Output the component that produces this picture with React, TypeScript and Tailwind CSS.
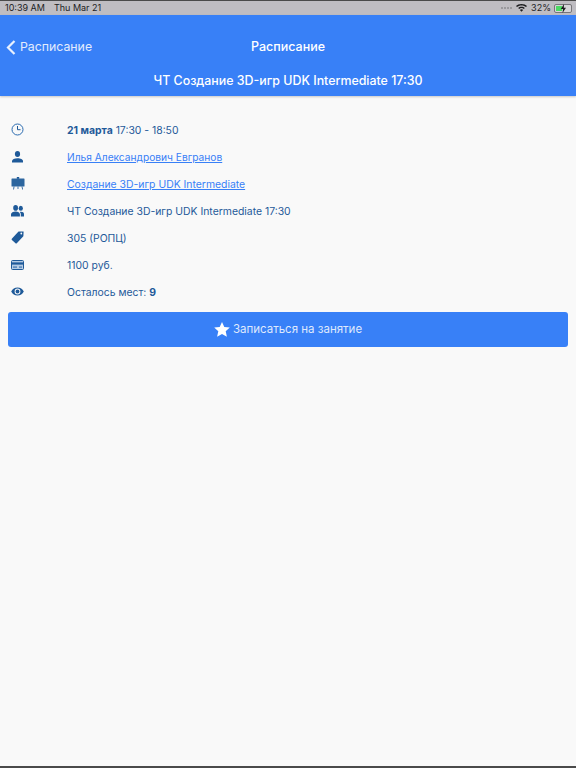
import { ReactNode } from "react";

const font = { fontFamily: "Inter, Roboto, sans-serif" };

function Row({ icon, children }: { icon: ReactNode; children: ReactNode }) {
  return (
    <div className="flex h-[27px] items-center">
      <div className="flex w-[67px] shrink-0 pb-[2px] pl-[11px]">{icon}</div>
      <div className="text-[10.4px] text-[#1f5a99]">{children}</div>
    </div>
  );
}

const ClockIcon = (
  <svg width="13" height="13" viewBox="0 0 13 13" fill="none" stroke="#2a6bb0" strokeWidth="1">
    <circle cx="6.5" cy="6.500" r="5.500" />
    <path d="M6.500 3v3.700h3" stroke="#1f5a99" />
  </svg>
);
const PersonIcon = (
  <svg width="13" height="12" viewBox="0 0 13 12" fill="#1f5a99">
    <ellipse cx="6.500" cy="3" rx="2.600" ry="2.900" />
    <path d="M1 11.500v-1.400C1 8.300 3.500 7.200 6.500 7.200s5.500 1.100 5.500 2.900v1.400z" />
  </svg>
);
const EaselIcon = (
  <svg width="14" height="13" viewBox="0 0 14 13" fill="#1f5a99">
    <rect x="0.500" y="1.500" width="13" height="8" rx="0.500" fill="#2d669f" />
    <rect x="5.800" y="0" width="2.400" height="1.800" />
    <path d="M2.600 9.500h.9L3 12.600h-.8zM10.500 9.500h.9l.6 3.100h-.8zM6.600 9.500h.8v2.600h-.8z" />
  </svg>
);
const GroupIcon = (
  <svg width="13" height="12" viewBox="0 0 13 12" fill="#1f5a99">
    <ellipse cx="4.600" cy="2.900" rx="2.400" ry="2.800" />
    <ellipse cx="9.800" cy="3.200" rx="2.100" ry="2.500" />
    <path d="M0 11.500V9.300C0 7.600 2.200 6.400 4.600 6.400s4.300 1.200 4.300 2.900v2.200z" />
    <path d="M9.800 11.500V9.100c0-1-.4-1.700-1-2.200.4-.1.800-.2 1.200-.2 1.700 0 3 .9 3 2.300v2.500z" />
  </svg>
);
const TagIcon = (
  <svg width="13" height="13" viewBox="0 0 13 13" fill="#1f5a99">
    <path fillRule="evenodd" d="M8 .5 12.200.4c.3 0 .4.200.4.400l-.2 4c0 .3-.1.500-.3.700l-6.300 6.700c-.4.400-.9.400-1.300.1L.9 9.100c-.4-.4-.4-.9-.1-1.300L7.300.8C7.500.6 7.700.5 8 .5zM10.300 1.600a.9.9 0 1 0 0 1.800.9.9 0 0 0 0-1.800z" />
  </svg>
);
const CardIcon = (
  <svg width="13" height="10" viewBox="0 0 13 10" fill="none">
    <rect x="0.500" y="0.500" width="12" height="9" rx="1" fill="#b5cbe3" stroke="#1f5a99" />
    <rect x="0.500" y="2.400" width="12" height="2.200" fill="#1f5a99" />
    <rect x="2" y="6.400" width="4" height="1.400" fill="#4f82b8" />
    <rect x="8" y="6.400" width="3" height="1.400" fill="#4f82b8" />
  </svg>
);
const EyeIcon = (
  <svg width="13" height="9" viewBox="0 0 13 9" fill="#1f5a99">
    <path fillRule="evenodd" d="M6.500.5C9.300.5 11.500 2.100 12.800 4.500 11.500 6.900 9.300 8.500 6.500 8.500S1.500 6.900.2 4.500C1.500 2.100 3.700.5 6.500.5zm0 1.100a2.900 2.900 0 1 0 0 5.800 2.900 2.900 0 0 0 0-5.800z" />
    <circle cx="6.500" cy="4.500" r="1.900" />
  </svg>
);

export default function App() {
  return (
    <div className="flex h-[768px] w-[576px] flex-col overflow-hidden border-b-2 border-[#4a4a4a] bg-[#f9f9f9]" style={font}>
      {/* status bar */}
      <div className="flex h-[15px] shrink-0 items-center justify-between border-t border-[#4a4a4a] bg-[#bfbdc2] pl-[5px] pr-[4px] text-[9px] text-[#1d1d1f]">
        <div className="flex gap-[9px]">
          <span>10:39 AM</span>
          <span>Thu Mar 21</span>
        </div>
        <div className="flex items-center gap-[3px]">
          <div className="mr-[1px] flex gap-[1px]">
            <span className="h-[2px] w-[2px] bg-[#9a999d]" />
            <span className="h-[2px] w-[2px] bg-[#9a999d]" />
            <span className="h-[2px] w-[2px] bg-[#9a999d]" />
            <span className="h-[2px] w-[2px] bg-[#9a999d]" />
          </div>
          <svg width="11" height="8" viewBox="0 0 11 8" fill="#1d1d1f">
            <path d="M5.500 0C8 0 9.800.9 11 2.100L10 3.100C8.900 2.100 7.400 1.400 5.500 1.400S2.100 2.100 1 3.100L0 2.100C1.200.9 3 0 5.500 0z" />
            <path d="M5.500 2.700c1.400 0 2.500.5 3.300 1.300l-1 1c-.6-.5-1.300-.9-2.300-.9s-1.700.4-2.300.9l-1-1c.8-.8 1.900-1.300 3.300-1.300z" />
            <path d="M5.500 5.300c.7 0 1.200.2 1.600.6L5.500 7.700 3.900 5.900c.4-.4.900-.6 1.600-.6z" />
          </svg>
          <span className="ml-[1px]">32%</span>
          <div className="relative flex h-[9px] w-[18px] items-center rounded-[2px] border border-[#77767a] bg-[#d6d5d8] p-[1px]">
            <div className="h-full w-[6px] bg-[#4cd964]" />
            <svg className="absolute left-[5px] top-[-1px]" width="7" height="9" viewBox="0 0 7 9" fill="#1d1d1f">
              <path d="M4 0 .8 5H3L2.500 9 6 3.800H3.800z" />
            </svg>
          </div>
        </div>
      </div>

      {/* nav */}
      <div className="relative z-10 shrink-0 bg-[#3880f7] text-white shadow-[0_1px_2px_rgba(0,0,0,0.2)]">
        <div className="relative flex h-[48px] items-center justify-center pt-[16px]">
          <div className="absolute left-[6px] top-[23px] flex items-center gap-[4px] text-[12.3px] text-[#e3ecfd]">
            <svg width="10" height="15" viewBox="0 0 10 15" fill="none" stroke="#e8f0fe" strokeWidth="2.200">
              <path d="M8.500 1 2 7.500 8.500 14" />
            </svg>
            <span>Расписание</span>
          </div>
          <span className="text-[12.5px] font-medium">Расписание</span>
        </div>
        <div className="flex h-[33px] items-center justify-center pt-[3px] text-[12.4px] font-medium">
          ЧТ Создание 3D-игр UDK Intermediate 17:30
        </div>
      </div>

      {/* details */}
      <div className="flex flex-col px-0 pt-[21px]">
        <Row icon={ClockIcon}>
          <b className="font-bold">21 марта</b> 17:30 - 18:50
        </Row>
        <Row icon={PersonIcon}>
          <span className="text-[10.2px] text-[#3880f7] underline">Илья Александрович Евгранов</span>
        </Row>
        <Row icon={EaselIcon}>
          <span className="text-[#3880f7] underline">Создание 3D-игр UDK Intermediate</span>
        </Row>
        <Row icon={GroupIcon}>ЧТ Создание 3D-игр UDK Intermediate 17:30</Row>
        <Row icon={TagIcon}>305 (РОПЦ)</Row>
        <Row icon={CardIcon}>1100 руб.</Row>
        <Row icon={EyeIcon}>
          Осталось мест: <b className="font-bold">9</b>
        </Row>
        <button className="mx-[8px] mt-[6px] flex h-[35px] items-center justify-center gap-[3px] rounded-[3px] bg-[#3880f7] text-[11.5px] text-[#dfe9fd]">
          <svg width="16" height="15" viewBox="0 0 16 15" fill="#fff">
            <path d="M8 0l2.300 5 5.500.6-4.100 3.700 1.200 5.400L8 12l-4.900 2.700 1.200-5.400L.2 5.600 5.700 5z" />
          </svg>
          Записаться на занятие
        </button>
      </div>
    </div>
  );
}
